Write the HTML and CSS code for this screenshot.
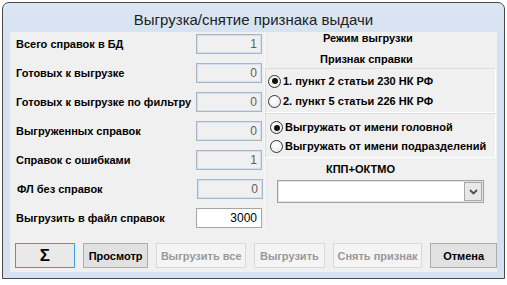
FILE: index.html
```html
<!DOCTYPE html>
<html lang="ru">
<head>
    <meta charset="UTF-8">
    <title>Выгрузка/снятие признака выдачи</title>
    <link rel="stylesheet" href="styles.css">
</head>
<body>
    <div class="window">
        <div class="titlebar">Выгрузка/снятие признака выдачи</div>
        <div class="client">
            <div class="columns">
                <div class="counters">
                    <label>Всего справок в БД</label>
                    <div class="count">1</div>
                    <label>Готовых к выгрузке</label>
                    <div class="count">0</div>
                    <label>Готовых к выгрузке по фильтру</label>
                    <div class="count">0</div>
                    <label>Выгруженных справок</label>
                    <div class="count">0</div>
                    <label>Справок с ошибками</label>
                    <div class="count">1</div>
                    <label class="shifted">ФЛ без справок</label>
                    <div class="count shifted">0</div>
                    <label>Выгрузить в файл справок</label>
                    <div class="count editable">3000</div>
                </div>

                <div class="mode">
                    <div class="caption caption-mode">Режим выгрузки</div>
                    <div class="caption caption-sign">Признак справки</div>
                    <div class="panel panel-sign">
                        <div class="radio"><span class="dot checked"></span>1. пункт 2 статьи 230 НК РФ</div>
                        <div class="radio"><span class="dot"></span>2. пункт 5 статьи 226 НК РФ</div>
                    </div>
                    <div class="panel panel-owner">
                        <div class="radio"><span class="dot checked"></span>Выгружать от имени головной</div>
                        <div class="radio"><span class="dot"></span>Выгружать от имени подразделений</div>
                    </div>
                    <div class="caption caption-kpp">КПП+ОКТМО</div>
                    <div class="combo">
                        <div class="combo-text"></div>
                        <div class="combo-btn">
                            <svg width="9" height="6" viewBox="0 0 9 6"><path d="M1 1 L4.5 4.5 L8 1" fill="none" stroke="#4d4d4d" stroke-width="1.8"/></svg>
                        </div>
                    </div>
                </div>
            </div>

            <div class="buttons">
                <button class="btn btn-sum">Σ</button>
                <button class="btn btn-view">Просмотр</button>
                <button class="btn btn-all" disabled>Выгрузить все</button>
                <button class="btn btn-export" disabled>Выгрузить</button>
                <button class="btn btn-clear" disabled>Снять признак</button>
                <button class="btn btn-cancel">Отмена</button>
            </div>
        </div>
    </div>
</body>
</html>
```

FILE: styles.css
```css
* {
    box-sizing: border-box;
}
body {
    margin: 0;
    background-color: #ffffff;
    font-family: "Liberation Sans", Arial, sans-serif;
    color: #000;
}
.window {
    margin: 2px 0 0 2px;
    width: 503px;
    height: 277px;
    border: 1px solid #4a4a4a;
    border-radius: 7px 7px 0 0;
    background: linear-gradient(#dbe6f3, #d5e2f1 40px, #d3e1f1);
    padding: 0 7px 6px 7px;
    display: flex;
    flex-direction: column;
}
.titlebar {
    height: 29px;
    padding-top: 6px;
    line-height: 22px;
    font-size: 15px;
    text-align: center;
    color: #1e1e1e;
}
.client {
    height: 240px;
    background-color: #f0f0f0;
    display: flex;
    flex-direction: column;
    padding: 0 0 4px 0;
}
.columns {
    display: flex;
}
.counters {
    width: 254px;
    padding: 2px 0 0 6px;
    display: grid;
    grid-template-columns: 180px 66px;
    grid-auto-rows: 20px;
    row-gap: 9px;
    align-items: center;
}
.counters label {
    font-size: 11px;
    font-weight: bold;
}
.count {
    height: 20px;
    border: 1px solid #a9b4c4;
    box-shadow: inset 0 0 0 1px #d3e0ef;
    background-color: #f0f0f0;
    color: #5e5e5e;
    font-size: 12px;
    line-height: 18px;
    text-align: right;
    padding-right: 4px;
}
.counters .shifted {
    position: relative;
    left: 1px;
}
.count.editable {
    background-color: #ffffff;
    border-color: #a5a5a5;
    box-shadow: none;
    color: #000;
}
.mode {
    width: 233px;
    border-left: 1px solid #f8f8f8;
    font-size: 11px;
    font-weight: bold;
}
.caption {
    line-height: 12px;
}
.caption-mode {
    padding-left: 58px;
}
.caption-sign {
    margin-top: 9px;
    padding-left: 55px;
}
.caption-kpp {
    margin-top: 5px;
    padding-left: 61px;
}
.panel {
    margin: 0 1px 0 0;
    border-top: 1px solid #dcdcdc;
    border-left: 1px solid #dcdcdc;
    border-bottom: 1px solid #ffffff;
    border-right: 1px solid #ffffff;
    padding-left: 2px;
}
.panel-sign {
    margin-top: 3px;
    padding-top: 2px;
    padding-bottom: 1px;
}
.panel-sign .radio {
    line-height: 20px;
}
.panel-owner {
    padding-top: 4px;
    padding-bottom: 1px;
    padding-left: 4px;
}
.panel-owner .radio {
    line-height: 19px;
}
.radio {
    display: flex;
    align-items: center;
    gap: 2px;
    white-space: nowrap;
}
.dot {
    width: 13px;
    height: 13px;
    border: 1px solid #333;
    border-radius: 50%;
    background: radial-gradient(circle at 40% 35%, #ffffff, #e6e6e6);
    display: flex;
    align-items: center;
    justify-content: center;
    flex-shrink: 0;
}
.dot.checked::after {
    content: "";
    width: 6px;
    height: 6px;
    border-radius: 50%;
    background-color: #111;
}
.combo {
    margin: 5px 0 0 12px;
    width: 207px;
    height: 23px;
    border: 1px solid #a3a3a3;
    box-shadow: inset 0 0 0 1px #e2e2e2;
    background-color: #ffffff;
    display: flex;
    justify-content: flex-end;
    padding: 1px;
}
.combo-btn {
    width: 18px;
    border: 1px solid #a8a8a8;
    background-color: #e8e8e8;
    display: flex;
    align-items: center;
    justify-content: center;
}
.buttons {
    margin-top: auto;
    display: flex;
    gap: 8px;
    padding-left: 5px;
}
.btn {
    height: 25px;
    border: 1px solid #adadad;
    background-color: #e1e1e1;
    font-family: "Liberation Sans", Arial, sans-serif;
    font-size: 11px;
    font-weight: bold;
    color: #000;
    padding: 0;
}
.btn:disabled {
    background-color: #f4f4f4;
    border-color: #d9d9d9;
    color: #999999;
}
.btn-sum {
    width: 60px;
    border-color: #3c9bf0;
    background-color: #e9e9e9;
    font-size: 17px;
}
.btn-view {
    width: 66px;
}
.btn-all {
    width: 90px;
}
.btn-export {
    width: 71px;
}
.btn-clear {
    width: 90px;
}
.btn-cancel {
    width: 67px;
}
```
